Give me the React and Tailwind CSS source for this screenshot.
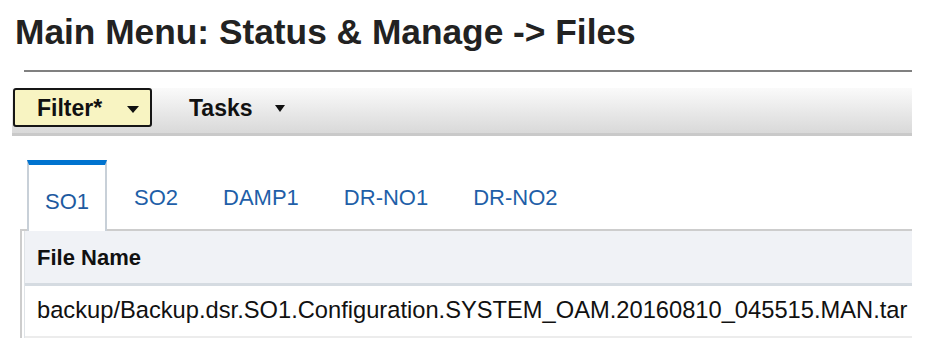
import React from "react";

function Tri({ w, h }) {
  return (
    <svg width={w} height={h} viewBox={`0 0 ${w} ${h}`} className="block">
      <polygon points={`0,0 ${w},0 ${w / 2},${h}`} fill="#111" />
    </svg>
  );
}

export default function App() {
  const tabs = ["SO1", "SO2", "DAMP1", "DR-NO1", "DR-NO2"];
  return (
    <div className="w-[934px] h-[363px] bg-white overflow-hidden font-['Liberation_Sans',Arial,sans-serif]">
      <h1 className="ml-[15px] pt-[12px] text-[35.3px] leading-[40px] font-bold text-[#222] whitespace-nowrap">
        Main Menu: Status &amp; Manage -&gt; Files
      </h1>
      <div className="ml-[24px] w-[888px] h-[2px] bg-[#808080] mt-[18px]" />
      <div className="ml-[12px] w-[900px] mt-[16px] h-[48px] bg-gradient-to-b from-[#fafafa] to-[#d9d9d9] border-b-[3px] border-[#c9c9c9] flex items-start">
        <div className="ml-[1px] h-[39px] w-[139px] bg-[#f8f4c2] border-2 border-[#161616] rounded-[3px] flex items-center pl-[22px]">
          <span className="text-[23px] leading-[26px] font-bold text-[#111]">Filter*</span>
          <span className="ml-[25px] mt-[4px]">
            <Tri w={12} h={7} />
          </span>
        </div>
        <div className="h-[39px] flex items-center ml-[37px]">
          <span className="text-[23px] leading-[26px] font-bold text-[#111]">Tasks</span>
          <span className="ml-[22px] mt-[1px]">
            <Tri w={10} h={7} />
          </span>
        </div>
      </div>
      <div className="ml-[20px] w-[892px] mt-[24px]">
        <div className="flex items-end pl-[7px] gap-[9px] relative z-10 h-[71px]">
          {tabs.map((t, i) =>
            i === 0 ? (
              <div
                key={t}
                className="bg-white border-t-[5px] border-t-[#0073cf] border-x-2 border-x-[#c8d0d8] px-[16px] pt-[24px] pb-[16px] text-[22px] leading-[26px] text-[#1e5aa0]"
              >
                {t}
              </div>
            ) : (
              <div
                key={t}
                className="border-x-2 border-x-transparent px-[16px] pb-[20px] text-[22px] leading-[26px] text-[#1f5fa8]"
              >
                {t}
              </div>
            )
          )}
        </div>
        <div className="-mt-[2px] border-t-2 border-l-2 border-[#cdcdcd]">
          <div className="ml-[2px] border-l border-[#dfe3e7]">
            <div className="h-[55px] bg-[#f0f2f6] border-b-[3px] border-[#d5dbe1] flex items-center pl-[12px]">
              <span className="text-[22px] font-bold text-[#111]">File Name</span>
            </div>
            <div className="h-[52px] bg-white border-b-2 border-[#ececec] flex items-center pl-[12px]">
              <span className="text-[23.7px] text-[#111] whitespace-nowrap">
                backup/Backup.dsr.SO1.Configuration.SYSTEM_OAM.20160810_045515.MAN.tar
              </span>
            </div>
          </div>
        </div>
      </div>
    </div>
  );
}
